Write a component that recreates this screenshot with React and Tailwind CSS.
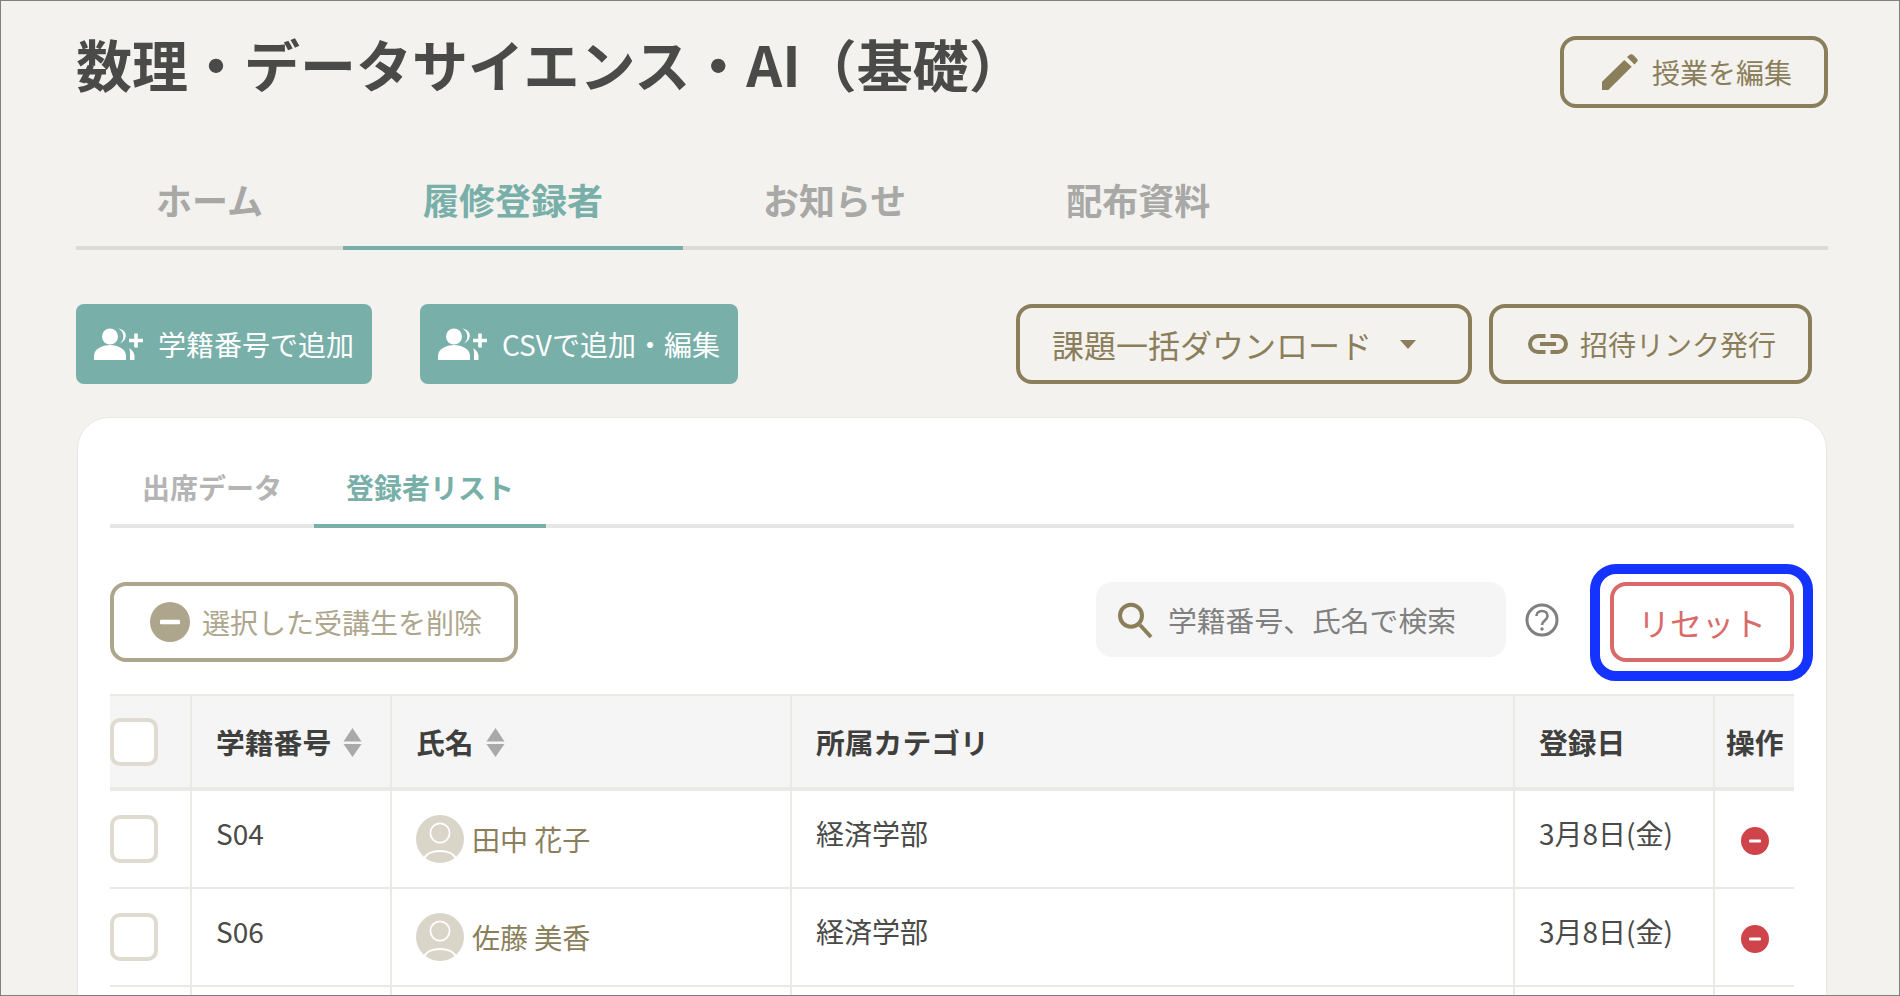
import React from "react";

const PersonPlus = () => (
  <svg width="50" height="32" viewBox="0 0 50 32" fill="#fff" className="shrink-0">
    <circle cx="16" cy="8.5" r="8" />
    <path d="M24.3 .3C29 1.5 31.8 4 31.8 7.6 31.8 11 29.5 14 26 15.4 28.6 13 29.5 10.6 29.3 7.8 29 4.6 27.2 2 24.3 .3Z" />
    <path d="M0 32V28C0 21 8 17 16 17S32 21 32 28V32Z" />
    <path d="M35 20C38.5 22 40.5 25 40.5 28V32H36V27C36 24.5 36 22 35 20Z" />
    <path d="M40.2 5.5H43.8V10.7H49V14.3H43.8V19.5H40.2V14.3H35V10.7H40.2Z" />
  </svg>
);

const Sort = () => (
  <svg width="19" height="29" viewBox="0 0 19 29" fill="#a9a9a9" className="shrink-0">
    <path d="M9.5 0L18.5 13.5H.5Z" />
    <path d="M.5 16H18.5L9.5 29Z" />
  </svg>
);

const Avatar = () => (
  <svg width="48" height="48" viewBox="0 0 48 48" className="shrink-0">
    <circle cx="24" cy="24" r="24" fill="#dad5c9" />
    <circle cx="24" cy="18" r="9.6" fill="none" stroke="#fff" strokeWidth="1.8" />
    <path d="M8 44C10 38.5 17 36 24 36S38 38.5 40 44" fill="none" stroke="#fff" strokeWidth="1.8" />
  </svg>
);

const Check = () => (
  <div className="w-12 h-12 rounded-[10px] border-4 border-[#e0dbd0] bg-white" />
);

const RemoveIcon = () => (
  <svg width="28" height="28" viewBox="0 0 28 28" className="mx-auto">
    <circle cx="14" cy="14" r="14" fill="#cf444b" />
    <rect x="8" y="12.6" width="12" height="2.8" rx="1" fill="#fff" />
  </svg>
);

const rows = [
  { id: "S04", name: "田中 花子", dept: "経済学部", date: "3月8日(金)" },
  { id: "S06", name: "佐藤 美香", dept: "経済学部", date: "3月8日(金)" },
];

export default function App() {
  return (
    <div className="box-border w-[1900px] h-[996px] overflow-hidden border border-[#808080] bg-[#f3f2ef] pl-[75px] pr-[71px] pt-[35px] text-[#4a4a48] font-[family-name:'Noto_Sans_CJK_JP','Noto_Sans',sans-serif]">
      <header className="flex items-start justify-between">
        <h1 className="-mt-[3px] text-[56px] leading-[60px] font-bold text-[#4a4a48] whitespace-nowrap">
          数理・データサイエンス・AI（基礎）
        </h1>
        <button className="box-border w-[268px] h-[72px] flex items-center pl-[38px] border-4 border-[#8b7e5a] rounded-[16px] text-[28px] text-[#8b7e5a]">
          <svg width="36" height="36" viewBox="0 0 36 36" fill="#8b7e5a" className="shrink-0">
            <path d="M0 27.7L22.3 6 29.7 12.7 6.3 36H0Z" />
            <path d="M25 3L28 .6Q30 -.2 31 .8L35.2 5Q36.3 6.2 35.3 7.5L32.5 10.5Z" />
          </svg>
          <span className="ml-[14px]">授業を編集</span>
        </button>
      </header>

      <nav className="mt-[66px] flex border-b-4 border-[#dcdbd7] text-[36px] leading-[50px] font-bold text-[#a8a8a6]">
        <a className="-mb-1 px-20 pb-[22px] border-b-4 border-transparent">ホーム</a>
        <a className="-mb-1 px-20 pb-[22px] border-b-4 border-[#79afa9] text-[#79afa9]">履修登録者</a>
        <a className="-mb-1 px-20 pb-[22px] border-b-4 border-transparent">お知らせ</a>
        <a className="-mb-1 px-20 pb-[22px] border-b-4 border-transparent">配布資料</a>
      </nav>

      <div className="mt-[54px] flex justify-between pr-4">
        <div className="flex gap-12">
          <button className="w-[296px] h-20 flex items-center gap-[14px] pl-[18px] rounded-lg bg-[#79afa9] text-white text-[28px] whitespace-nowrap">
            <PersonPlus />
            学籍番号で追加
          </button>
          <button className="w-[318px] h-20 flex items-center gap-[14px] pl-[18px] rounded-lg bg-[#79afa9] text-white text-[28px] whitespace-nowrap">
            <PersonPlus />
            CSVで追加・編集
          </button>
        </div>
        <div className="flex gap-[17px]">
          <button className="box-border w-[456px] h-20 flex items-center pl-8 border-4 border-[#8b7e5a] rounded-[16px] text-[32px] text-[#8b7e5a] whitespace-nowrap">
            課題一括ダウンロード
            <svg width="16" height="9" viewBox="0 0 16 9" fill="#8b7e5a" className="ml-[28px]">
              <path d="M0 0H16L8 9Z" />
            </svg>
          </button>
          <button className="box-border w-[323px] h-20 flex items-center pl-[35px] border-4 border-[#8b7e5a] rounded-[16px] text-[28px] text-[#8b7e5a] whitespace-nowrap">
            <svg width="40" height="20" viewBox="0 0 40 20" fill="none" stroke="#8b7e5a" strokeWidth="4" className="shrink-0">
              <path d="M17.5 2H10A8 8 0 0 0 10 18H17.5" />
              <path d="M22.5 2H30A8 8 0 0 1 30 18H22.5" />
              <path d="M12 10H28" />
            </svg>
            <span className="ml-3">招待リンク発行</span>
          </button>
        </div>
      </div>

      <section className="mt-[33px] mx-[1px] border border-[#e8e7e3] rounded-[32px] bg-white px-8 pt-[49px] pb-10">
        <div className="flex border-b-4 border-[#e6e6e6] text-[28px] leading-10 font-bold text-[#b4b4b4]">
          <a className="-mb-1 px-8 pb-[17px] border-b-4 border-transparent">出席データ</a>
          <a className="-mb-1 px-8 pb-[17px] border-b-4 border-[#79afa9] text-[#79afa9]">登録者リスト</a>
        </div>

        <div className="mt-[54px] flex items-start justify-between">
          <button className="box-border w-[408px] h-20 flex items-center gap-3 pl-9 border-4 border-[#aea68c] rounded-[16px] text-[28px] text-[#aea68c] whitespace-nowrap">
            <svg width="40" height="40" viewBox="0 0 40 40" className="shrink-0">
              <circle cx="20" cy="20" r="20" fill="#aea68c" />
              <rect x="10" y="17.8" width="20" height="4.4" rx="1" fill="#fff" />
            </svg>
            選択した受講生を削除
          </button>
          <div className="flex items-start">
            <div className="w-[410px] h-[75px] flex items-center gap-[14px] pl-[20px] rounded-[16px] bg-[#f5f5f5] text-[28.8px] text-[#808080] whitespace-nowrap">
              <svg width="38" height="40" viewBox="0 0 38 40" fill="none" stroke="#8b7e5a" strokeWidth="4" className="shrink-0">
                <circle cx="15" cy="15.7" r="11" />
                <path d="M24 25L35 37" />
              </svg>
              <span>学籍番号、氏名で検索</span>
            </div>
            <svg width="34" height="34" viewBox="0 0 34 34" fill="none" stroke="#808080" className="ml-[19px] mt-[21px] shrink-0">
              <circle cx="17" cy="17" r="15" strokeWidth="3" />
              <path d="M11.5 13C11.5 9.8 14 8 17 8S22.5 9.8 22.5 13C22.5 17.5 17 17.5 17 22" strokeWidth="2.6" />
              <circle cx="17" cy="26" r="1.7" fill="#808080" stroke="none" />
            </svg>
            <div className="relative ml-[51px]">
              <button className="box-border w-[184px] h-20 flex items-center justify-center border-4 border-[#da6a6a] rounded-[16px] text-[32px] text-[#da6a6a]">
                リセット
              </button>
              <div className="absolute -left-[20px] -top-[18px] -right-[19px] -bottom-[19px] border-[10px] border-[#1433ff] rounded-[26px] pointer-events-none" />
            </div>
          </div>
        </div>

        <table className="mt-8 w-full table-fixed border-separate border-spacing-0 text-[28px] leading-10">
          <colgroup>
            <col className="w-[82px]" />
            <col className="w-[200px]" />
            <col className="w-[400px]" />
            <col className="w-[723px]" />
            <col className="w-[200px]" />
            <col className="w-[79px]" />
          </colgroup>
          <thead>
            <tr className="bg-[#f5f5f5] text-left text-[#3f3f3d] text-[28.8px] font-bold">
              <th className="h-[97px] border-t-2 border-b-4 border-r-2 border-[#e9e9e5] pt-[22px] align-top"><Check /></th>
              <th className="border-t-2 border-b-4 border-r-2 border-[#e9e9e5] pl-6 pt-[26px] align-top">
                <div className="flex items-center gap-[12px]">学籍番号<Sort /></div>
              </th>
              <th className="border-t-2 border-b-4 border-r-2 border-[#e9e9e5] pl-6 pt-[26px] align-top">
                <div className="flex items-center gap-[12px]">氏名<Sort /></div>
              </th>
              <th className="border-t-2 border-b-4 border-r-2 border-[#e9e9e5] pl-6 pt-[26px] align-top">所属カテゴリ</th>
              <th className="border-t-2 border-b-4 border-r-2 border-[#e9e9e5] pl-6 pt-[26px] align-top">登録日</th>
              <th className="border-t-2 border-b-4 border-[#e9e9e5] pl-[11px] pt-[26px] align-top">操作</th>
            </tr>
          </thead>
          <tbody className="text-[#4a4a48]">
            {rows.map((r) => (
              <tr key={r.id}>
                <td className="h-[98px] border-b-2 border-r-2 border-[#e9e9e5] pt-6 align-top"><Check /></td>
                <td className="border-b-2 border-r-2 border-[#e9e9e5] pl-6 pt-[22px] align-top">{r.id}</td>
                <td className="border-b-2 border-r-2 border-[#e9e9e5] pl-6 pt-6 align-top">
                  <div className="flex items-center gap-2 text-[#8b7e5a]">
                    <Avatar />
                    <span>{r.name}</span>
                  </div>
                </td>
                <td className="border-b-2 border-r-2 border-[#e9e9e5] pl-6 pt-[22px] align-top">{r.dept}</td>
                <td className="border-b-2 border-r-2 border-[#e9e9e5] pl-6 pt-[22px] align-top">{r.date}</td>
                <td className="border-b-2 border-[#e9e9e5] pt-9 align-top"><RemoveIcon /></td>
              </tr>
            ))}
            <tr>
              <td className="h-[98px] border-r-2 border-[#e9e9e5]" />
              <td className="border-r-2 border-[#e9e9e5]" />
              <td className="border-r-2 border-[#e9e9e5]" />
              <td className="border-r-2 border-[#e9e9e5]" />
              <td className="border-r-2 border-[#e9e9e5]" />
              <td />
            </tr>
          </tbody>
        </table>
      </section>
    </div>
  );
}
